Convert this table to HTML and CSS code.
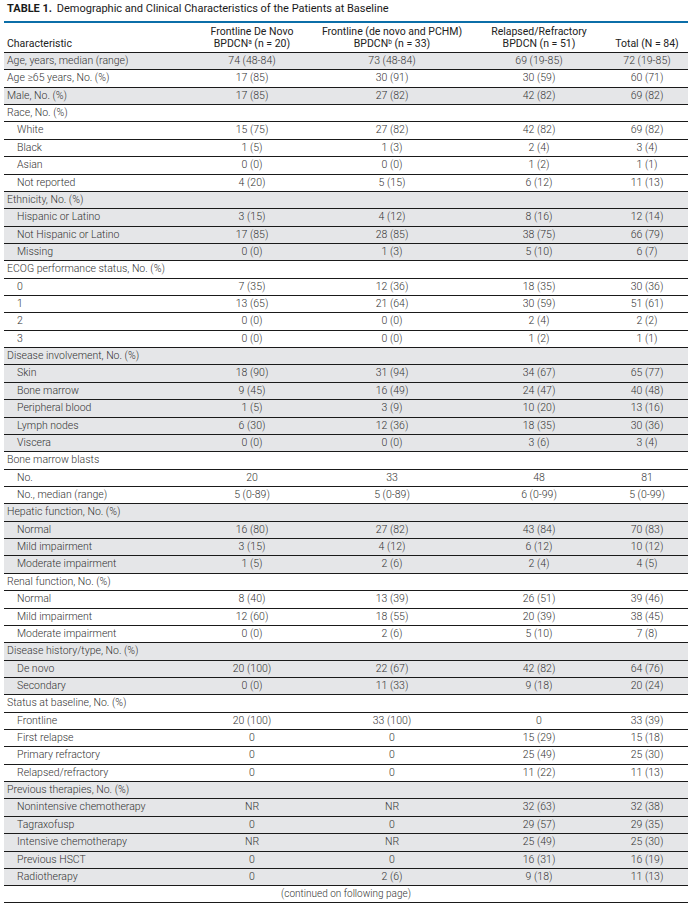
FILE: index.html
```html
<!DOCTYPE html>
<html lang="en">
<head>
<meta charset="utf-8">
<title>Table 1</title>
<link rel="stylesheet" href="styles.css">
</head>
<body>
<div class="page">
  <div class="title"><span class="tnum">TABLE 1.</span> Demographic and Clinical Characteristics of the Patients at Baseline</div>
  <table class="tbl">
    <colgroup>
      <col class="c0"><col class="c1"><col class="c2"><col class="c3"><col class="c4">
    </colgroup>
    <thead>
      <tr>
        <th class="lab">Characteristic</th>
        <th>Frontline De Novo<br>BPDCN<sup>a</sup> (n = 20)</th>
        <th>Frontline (de novo and PCHM)<br>BPDCN<sup>b</sup> (n = 33)</th>
        <th>Relapsed/Refractory<br>BPDCN (n = 51)</th>
        <th>Total (N = 84)</th>
      </tr>
    </thead>
    <tbody class="shade">
      <tr><td class="lab">Age, years, median (range)</td><td>74 (48-84)</td><td>73 (48-84)</td><td>69 (19-85)</td><td>72 (19-85)</td></tr>
    </tbody>
    <tbody>
      <tr><td class="lab">Age ≥65 years, No. (%)</td><td>17 (85)</td><td>30 (91)</td><td>30 (59)</td><td>60 (71)</td></tr>
    </tbody>
    <tbody class="shade">
      <tr><td class="lab">Male, No. (%)</td><td>17 (85)</td><td>27 (82)</td><td>42 (82)</td><td>69 (82)</td></tr>
    </tbody>
    <tbody>
      <tr><td class="lab" colspan="5">Race, No. (%)</td></tr>
      <tr><td class="lab sub">White</td><td>15 (75)</td><td>27 (82)</td><td>42 (82)</td><td>69 (82)</td></tr>
      <tr><td class="lab sub">Black</td><td>1 (5)</td><td>1 (3)</td><td>2 (4)</td><td>3 (4)</td></tr>
      <tr><td class="lab sub">Asian</td><td>0 (0)</td><td>0 (0)</td><td>1 (2)</td><td>1 (1)</td></tr>
      <tr><td class="lab sub">Not reported</td><td>4 (20)</td><td>5 (15)</td><td>6 (12)</td><td>11 (13)</td></tr>
    </tbody>
    <tbody class="shade">
      <tr><td class="lab" colspan="5">Ethnicity, No. (%)</td></tr>
      <tr><td class="lab sub">Hispanic or Latino</td><td>3 (15)</td><td>4 (12)</td><td>8 (16)</td><td>12 (14)</td></tr>
      <tr><td class="lab sub">Not Hispanic or Latino</td><td>17 (85)</td><td>28 (85)</td><td>38 (75)</td><td>66 (79)</td></tr>
      <tr><td class="lab sub">Missing</td><td>0 (0)</td><td>1 (3)</td><td>5 (10)</td><td>6 (7)</td></tr>
    </tbody>
    <tbody>
      <tr><td class="lab" colspan="5">ECOG performance status, No. (%)</td></tr>
      <tr><td class="lab sub">0</td><td>7 (35)</td><td>12 (36)</td><td>18 (35)</td><td>30 (36)</td></tr>
      <tr><td class="lab sub">1</td><td>13 (65)</td><td>21 (64)</td><td>30 (59)</td><td>51 (61)</td></tr>
      <tr><td class="lab sub">2</td><td>0 (0)</td><td>0 (0)</td><td>2 (4)</td><td>2 (2)</td></tr>
      <tr><td class="lab sub">3</td><td>0 (0)</td><td>0 (0)</td><td>1 (2)</td><td>1 (1)</td></tr>
    </tbody>
    <tbody class="shade">
      <tr><td class="lab" colspan="5">Disease involvement, No. (%)</td></tr>
      <tr><td class="lab sub">Skin</td><td>18 (90)</td><td>31 (94)</td><td>34 (67)</td><td>65 (77)</td></tr>
      <tr><td class="lab sub">Bone marrow</td><td>9 (45)</td><td>16 (49)</td><td>24 (47)</td><td>40 (48)</td></tr>
      <tr><td class="lab sub">Peripheral blood</td><td>1 (5)</td><td>3 (9)</td><td>10 (20)</td><td>13 (16)</td></tr>
      <tr><td class="lab sub">Lymph nodes</td><td>6 (30)</td><td>12 (36)</td><td>18 (35)</td><td>30 (36)</td></tr>
      <tr><td class="lab sub">Viscera</td><td>0 (0)</td><td>0 (0)</td><td>3 (6)</td><td>3 (4)</td></tr>
    </tbody>
    <tbody>
      <tr><td class="lab" colspan="5">Bone marrow blasts</td></tr>
      <tr><td class="lab sub">No.</td><td>20</td><td>33</td><td>48</td><td>81</td></tr>
      <tr><td class="lab sub">No., median (range)</td><td>5 (0-89)</td><td>5 (0-89)</td><td>6 (0-99)</td><td>5 (0-99)</td></tr>
    </tbody>
    <tbody class="shade">
      <tr><td class="lab" colspan="5">Hepatic function, No. (%)</td></tr>
      <tr><td class="lab sub">Normal</td><td>16 (80)</td><td>27 (82)</td><td>43 (84)</td><td>70 (83)</td></tr>
      <tr><td class="lab sub">Mild impairment</td><td>3 (15)</td><td>4 (12)</td><td>6 (12)</td><td>10 (12)</td></tr>
      <tr><td class="lab sub">Moderate impairment</td><td>1 (5)</td><td>2 (6)</td><td>2 (4)</td><td>4 (5)</td></tr>
    </tbody>
    <tbody>
      <tr><td class="lab" colspan="5">Renal function, No. (%)</td></tr>
      <tr><td class="lab sub">Normal</td><td>8 (40)</td><td>13 (39)</td><td>26 (51)</td><td>39 (46)</td></tr>
      <tr><td class="lab sub">Mild impairment</td><td>12 (60)</td><td>18 (55)</td><td>20 (39)</td><td>38 (45)</td></tr>
      <tr><td class="lab sub">Moderate impairment</td><td>0 (0)</td><td>2 (6)</td><td>5 (10)</td><td>7 (8)</td></tr>
    </tbody>
    <tbody class="shade">
      <tr><td class="lab" colspan="5">Disease history/type, No. (%)</td></tr>
      <tr><td class="lab sub">De novo</td><td>20 (100)</td><td>22 (67)</td><td>42 (82)</td><td>64 (76)</td></tr>
      <tr><td class="lab sub">Secondary</td><td>0 (0)</td><td>11 (33)</td><td>9 (18)</td><td>20 (24)</td></tr>
    </tbody>
    <tbody>
      <tr><td class="lab" colspan="5">Status at baseline, No. (%)</td></tr>
      <tr><td class="lab sub">Frontline</td><td>20 (100)</td><td>33 (100)</td><td>0</td><td>33 (39)</td></tr>
      <tr><td class="lab sub">First relapse</td><td>0</td><td>0</td><td>15 (29)</td><td>15 (18)</td></tr>
      <tr><td class="lab sub">Primary refractory</td><td>0</td><td>0</td><td>25 (49)</td><td>25 (30)</td></tr>
      <tr><td class="lab sub">Relapsed/refractory</td><td>0</td><td>0</td><td>11 (22)</td><td>11 (13)</td></tr>
    </tbody>
    <tbody class="shade">
      <tr><td class="lab" colspan="5">Previous therapies, No. (%)</td></tr>
      <tr><td class="lab sub">Nonintensive chemotherapy</td><td>NR</td><td>NR</td><td>32 (63)</td><td>32 (38)</td></tr>
      <tr><td class="lab sub">Tagraxofusp</td><td>0</td><td>0</td><td>29 (57)</td><td>29 (35)</td></tr>
      <tr><td class="lab sub">Intensive chemotherapy</td><td>NR</td><td>NR</td><td>25 (49)</td><td>25 (30)</td></tr>
      <tr><td class="lab sub">Previous HSCT</td><td>0</td><td>0</td><td>16 (31)</td><td>16 (19)</td></tr>
      <tr><td class="lab sub">Radiotherapy</td><td>0</td><td>2 (6)</td><td>9 (18)</td><td>11 (13)</td></tr>
    </tbody>
    <tfoot>
      <tr><td class="cont" colspan="5">(continued on following page)</td></tr>
    </tfoot>
  </table>
</div>
</body>
</html>
```
FILE: styles.css
```css
html, body {
  margin: 0;
  padding: 0;
  background: #ffffff;
}

.page {
  padding: 1px 2px 0 4px;
  font-family: Roboto, "Liberation Sans", Arial, sans-serif;
  color: #333333;
}

.title {
  font-size: 11px;
  line-height: 16px;
  height: 16px;
  color: #1a1a1a;
  margin-bottom: 4px;
  padding-left: 3px;
  white-space: nowrap;
}

.tnum {
  font-weight: 700;
  margin-right: 2px;
}

.tbl {
  width: 684px;
  table-layout: fixed;
  border-collapse: separate;
  border-spacing: 0;
  border-top: 2px solid #0b6ea8;
  font-size: 10.5px;
  font-weight: 300;
}

.c0 { width: 188px; }
.c1 { width: 120px; }
.c2 { width: 160px; }
.c3 { width: 134px; }
.c4 { width: 82px; }

.tbl th {
  font-weight: 400;
  text-align: center;
  vertical-align: bottom;
  line-height: 11.5px;
  padding: 3px 0 3px;
  border-bottom: 1px solid #1a1a1a;
  color: #222222;
  white-space: nowrap;
}

.tbl th sup {
  font-size: 6.5px;
  line-height: 0;
  vertical-align: 3px;
}

.tbl th.lab {
  text-align: left;
  padding-left: 3px;
}

.tbl td {
  text-align: center;
  line-height: 16.36px;
  padding: 0;
  border-bottom: 1px solid #1a1a1a;
  white-space: nowrap;
}

.tbl td.lab {
  text-align: left;
  padding-left: 3px;
}

.tbl td.sub {
  padding-left: 13px;
}

.shade td {
  background: #e5e6e8;
}

.tbl td.cont {
  text-align: center;
  line-height: 15.5px;
  border-bottom: 2px solid #1a1a1a;
  font-size: 10px;
}
```
